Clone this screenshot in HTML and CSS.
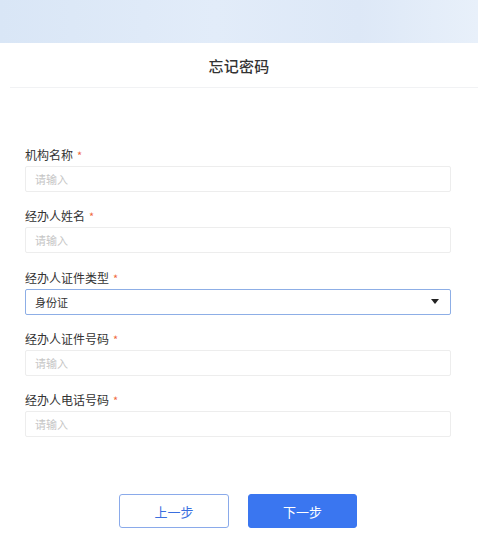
FILE: index.html
```html
<!DOCTYPE html>
<html lang="zh">
<head>
<meta charset="utf-8">
<title>忘记密码</title>
<link rel="stylesheet" href="styles.css">
</head>
<body>
<div class="banner"></div>
<div class="header"><h1 class="title">忘记密码</h1></div>
<form class="form">
  <div class="field">
    <label class="label">机构名称<span class="req">*</span></label>
    <div class="input placeholder">请输入</div>
  </div>
  <div class="field">
    <label class="label">经办人姓名<span class="req">*</span></label>
    <div class="input placeholder">请输入</div>
  </div>
  <div class="field">
    <label class="label">经办人证件类型<span class="req">*</span></label>
    <div class="input select"><span>身份证</span><span class="caret"></span></div>
  </div>
  <div class="field">
    <label class="label">经办人证件号码<span class="req">*</span></label>
    <div class="input placeholder">请输入</div>
  </div>
  <div class="field">
    <label class="label">经办人电话号码<span class="req">*</span></label>
    <div class="input placeholder">请输入</div>
  </div>
</form>
<div class="actions">
  <button class="btn btn-outline" type="button">上一步</button>
  <button class="btn btn-primary" type="button">下一步</button>
</div>
</body>
</html>
```
FILE: styles.css
```css
* { box-sizing: border-box; }
html, body { margin: 0; padding: 0; background: #fff; }
body {
  font-family: "Noto Sans CJK SC", "Noto Sans", sans-serif;
  color: #333;
}
.banner {
  height: 43px;
  background: linear-gradient(90deg, #d9e6f6 0%, #e2ecf9 45%, #dde8f7 75%, #e8f0fa 100%);
}
.header {
  height: 45px;
  margin-left: 10px;
  border-bottom: 1px solid #f1f2f4;
  display: flex;
  align-items: center;
  justify-content: center;
  padding-right: 10px;
}
.title {
  margin: 0;
  font-size: 15px;
  font-weight: 500;
  color: #333;
  letter-spacing: 0.3px;
}
.form {
  padding: 59px 27px 0 25px;
  display: flex;
  flex-direction: column;
  gap: 16.25px;
}
.field {
  display: flex;
  flex-direction: column;
  gap: 3px;
}
.label {
  font-size: 12px;
  line-height: 16px;
  color: #333;
}
.req {
  color: #f0683e;
  margin-left: 4px;
  font-size: 11px;
}
.input {
  height: 26px;
  border: 1px solid #ededed;
  border-radius: 2px;
  font-size: 11px;
  padding: 0 9px;
  display: flex;
  align-items: center;
}
.placeholder { color: #c6c6c6; }
.select {
  border-color: #8daee6;
  color: #333;
  justify-content: space-between;
  padding-right: 11px;
}
.caret {
  width: 0;
  height: 0;
  border-left: 4.5px solid transparent;
  border-right: 4.5px solid transparent;
  border-top: 5px solid #222;
}
.actions {
  display: flex;
  justify-content: center;
  gap: 19px;
  margin-top: 57px;
  padding-right: 2px;
}
.btn {
  width: 110px;
  height: 34px;
  border-radius: 3px;
  font-family: inherit;
  font-size: 13px;
  cursor: pointer;
}
.btn-outline {
  background: #fff;
  border: 1px solid #8aaaea;
  color: #3a6fdf;
}
.btn-primary {
  width: 109px;
  background: #3a76f0;
  border: 1px solid #3a76f0;
  color: #fff;
}
```
